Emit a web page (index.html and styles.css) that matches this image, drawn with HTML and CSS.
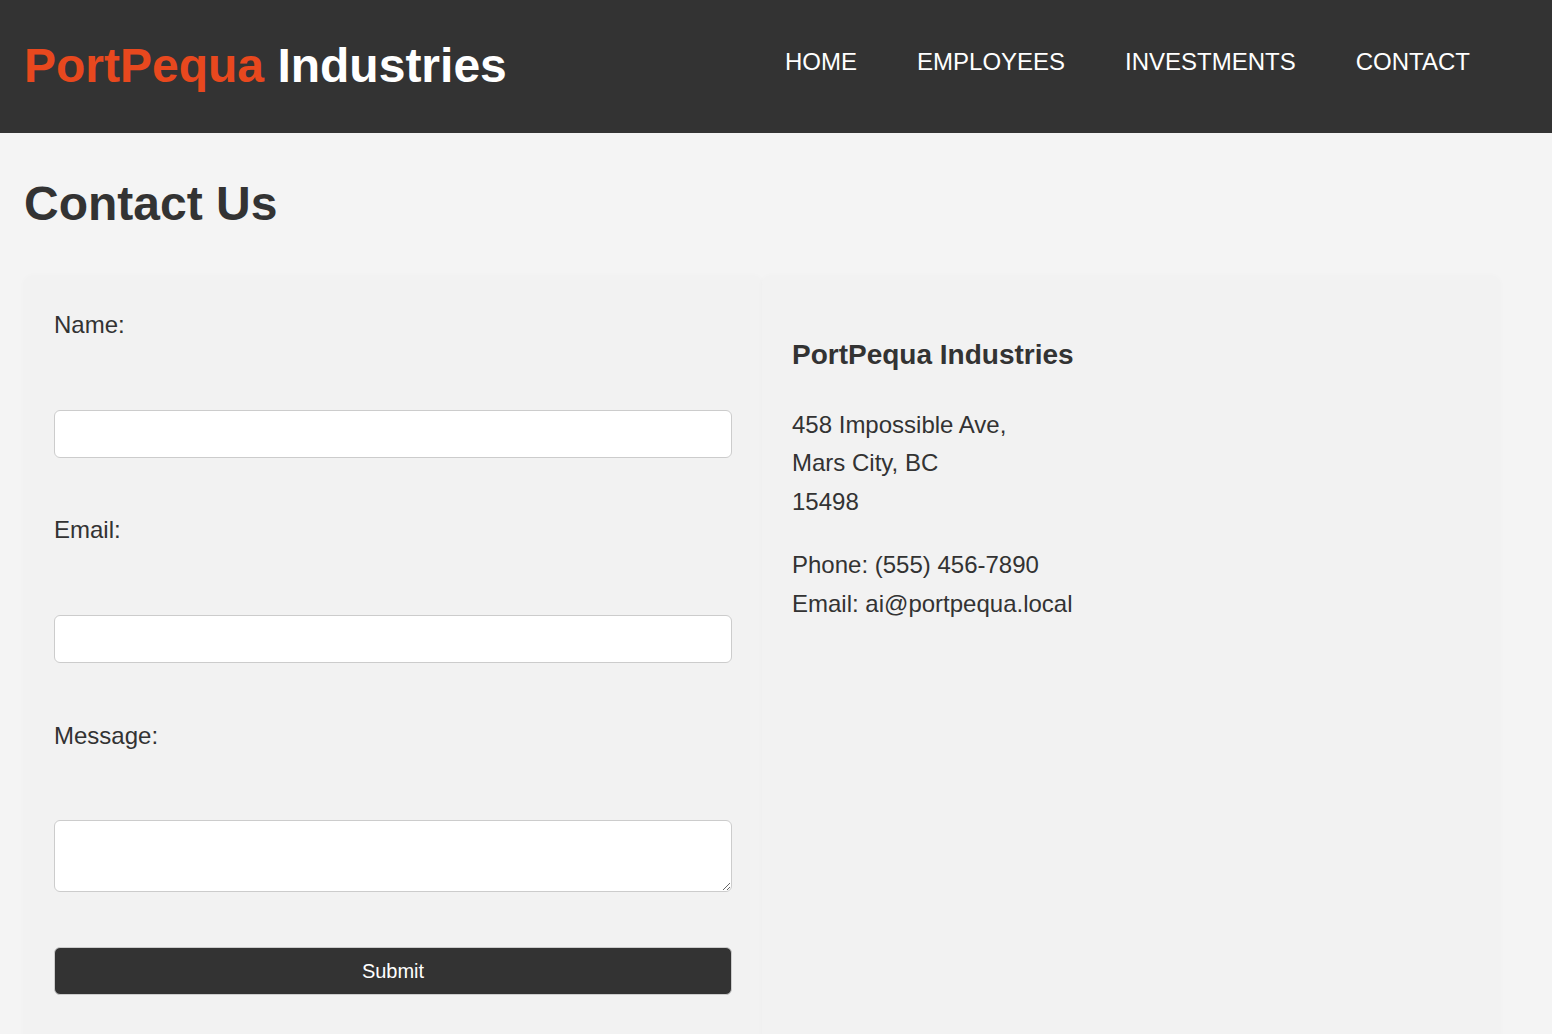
FILE: index.html
```html
<!DOCTYPE html>
<html lang="en">
<head>
<meta charset="utf-8">
<title>Contact Us - PortPequa Industries</title>
<link rel="stylesheet" href="styles.css">
</head>
<body>
<header class="site-header">
  <h1 class="logo"><span class="logo-accent">PortPequa</span> Industries</h1>
  <nav class="main-nav">
    <a href="#">HOME</a>
    <a href="#">EMPLOYEES</a>
    <a href="#">INVESTMENTS</a>
    <a href="#">CONTACT</a>
  </nav>
</header>
<main class="page">
  <h2 class="page-title">Contact Us</h2>
  <div class="contact-wrap">
    <form class="contact-form panel">
      <label for="name">Name:</label>
      <input type="text" id="name" class="field">
      <label for="email">Email:</label>
      <input type="email" id="email" class="field">
      <label for="message">Message:</label>
      <textarea id="message" class="field area"></textarea>
      <button type="submit" class="submit">Submit</button>
    </form>
    <div class="contact-info panel">
      <h3 class="info-title">PortPequa Industries</h3>
      <p>458 Impossible Ave,<br>Mars City, BC<br>15498</p>
      <p>Phone: (555) 456-7890<br>Email: ai@portpequa.local</p>
    </div>
  </div>
</main>
</body>
</html>
```
FILE: styles.css
```css
* { box-sizing: border-box; }

body {
  margin: 0;
  background: #f4f4f4;
  color: #333;
  font-family: "Liberation Sans", Arial, sans-serif;
  font-size: 24px;
  line-height: 1.6;
}

.site-header {
  background: #333;
  height: 133px;
  display: flex;
  align-items: center;
  justify-content: space-between;
  padding: 0 52px 2px 24px;
}

.logo {
  margin: 0;
  font-size: 48px;
  line-height: normal;
  color: #fff;
  font-weight: bold;
}

.logo-accent { color: #e8481e; }

.main-nav {
  display: flex;
  padding-bottom: 8px;
}

.main-nav a {
  color: #fff;
  text-decoration: none;
  font-size: 24px;
  line-height: normal;
  padding: 0 30px;
}

.page {
  padding: 33px 52px 0 24px;
}

.page-title {
  margin: 0 0 33px;
  font-size: 48px;
  line-height: 1.6;
  font-weight: bold;
}

.contact-wrap {
  display: flex;
}

.panel {
  flex: 1;
  background: #f2f2f2;
  border-radius: 9px;
  box-shadow: 0 0 6px rgba(0, 0, 0, 0.025);
  padding: 30px;
}

.contact-form label {
  display: block;
  margin-bottom: 65.5px;
}

.field {
  display: block;
  width: 100%;
  height: 48px;
  background: #fff;
  border: 1px solid #ccc;
  border-radius: 6px;
  margin: 0 0 53.5px;
  font-family: inherit;
  font-size: 20px;
}

.area {
  height: 72px;
  margin-bottom: 55px;
}

.submit {
  display: block;
  width: 100%;
  height: 48px;
  background: #333;
  color: #fff;
  border: 1px solid #ccc;
  border-radius: 6px;
  font-family: "Liberation Sans", Arial, sans-serif;
  font-size: 20px;
  margin-bottom: 20px;
}

.info-title {
  font-size: 28px;
  line-height: 1.6;
  margin: 27px 0 28px;
  font-weight: bold;
}

.contact-info p {
  margin: 0 0 24px;
  line-height: 1.62;
}
```
